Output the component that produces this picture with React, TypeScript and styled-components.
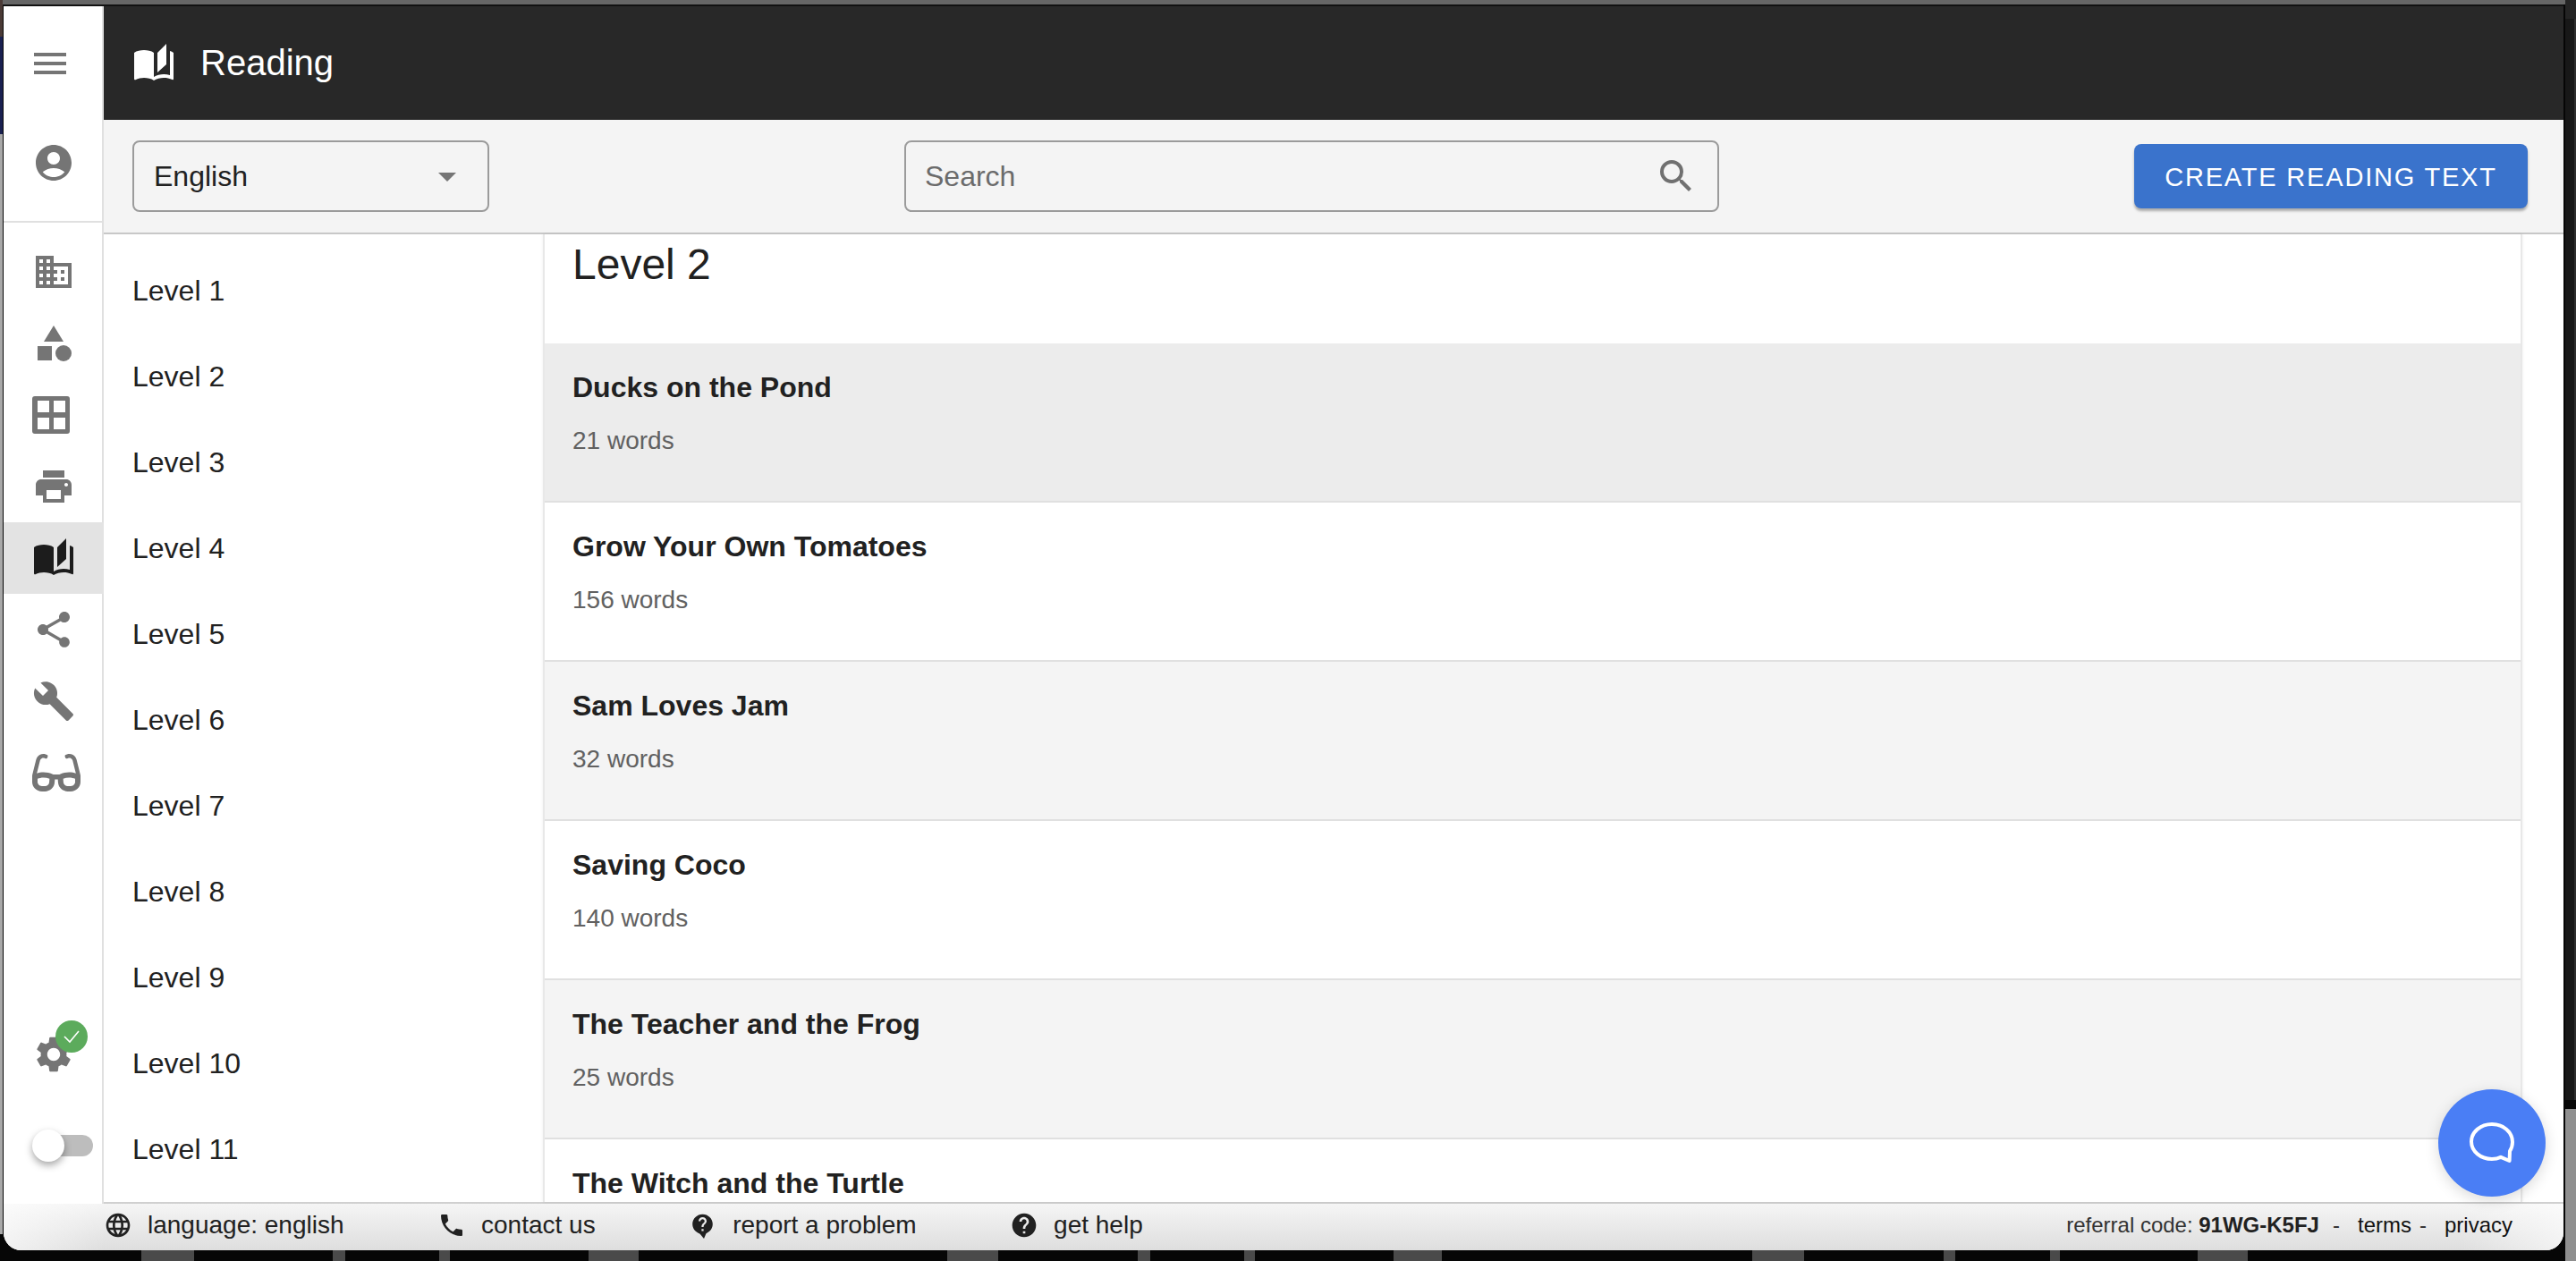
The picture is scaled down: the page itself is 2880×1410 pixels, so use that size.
import styled, { createGlobalStyle } from "styled-components";
import {
  MdAccountCircle,
  MdArrowDropDown,
  MdAutoStories,
  MdBuild,
  MdBusiness,
  MdCategory,
  MdHelp,
  MdLanguage,
  MdMenu,
  MdPhone,
  MdPrint,
  MdSearch,
  MdSettings,
  MdShare,
} from "react-icons/md";
import { FaGlasses } from "react-icons/fa";

const levels = [1, 2, 3, 4, 5, 6, 7, 8, 9, 10, 11];

const texts = [
  { title: "Ducks on the Pond", words: 21, tint: "#ececec" },
  { title: "Grow Your Own Tomatoes", words: 156, tint: "#ffffff" },
  { title: "Sam Loves Jam", words: 32, tint: "#f4f4f4" },
  { title: "Saving Coco", words: 140, tint: "#ffffff" },
  { title: "The Teacher and the Frog", words: 25, tint: "#f4f4f4" },
  { title: "The Witch and the Turtle", tint: "#ffffff" },
];

const streaks = [
  [158, 59], [372, 14], [491, 12], [658, 56], [1059, 57], [1272, 14], [1391, 12],
  [1558, 54], [1959, 58], [2173, 13], [2292, 11], [2457, 56],
];

function GridIcon() {
  return (
    <svg width="42" height="42" viewBox="0 0 42 42" fill="currentColor">
      <path
        fillRule="evenodd"
        d="M3 0h36a3 3 0 0 1 3 3v36a3 3 0 0 1-3 3H3a3 3 0 0 1-3-3V3a3 3 0 0 1 3-3zM6 5v13h13V5H6zm18 0v13h13V5H24zM6 24v13h13V24H6zm18 0v13h13V24H24z"
      />
    </svg>
  );
}

function ChatIcon() {
  return (
    <svg width="54" height="48" viewBox="0 0 54 48" fill="none">
      <path
        d="M27 3c12.5 0 23 8.5 23 20 0 4-1.2 7.400-3 10.200L46.600 44 37 39.800C34 41.500 30.500 42 27 42 14.500 42 4 33.500 4 22.500 4 11.500 14.500 3 27 3z"
        stroke="#fff"
        strokeWidth="4"
        strokeLinejoin="round"
      />
    </svg>
  );
}

// round bubble with a small tail, narrower than the plain help icon
function ProblemIcon() {
  return (
    <svg width="32" height="32" viewBox="0 0 32 32" fill="currentColor">
      <path d="M12 25l5 6 3-7z" />
      <path
        transform="translate(2.500 2.400) scale(1.130 1.100) translate(-0.500 -0.800)"
        d="M12 2C6.480 2 2 6.480 2 12s4.480 10 10 10 10-4.480 10-10S17.520 2 12 2zm1 17h-2v-2h2v2zm2.070-7.750l-.9.920C13.450 12.900 13 13.500 13 15h-2v-.5c0-1.100.45-2.100 1.170-2.830l1.240-1.260c.37-.36.59-.86.59-1.410 0-1.100-.9-2-2-2s-2 .9-2 2H8c0-2.210 1.790-4 4-4s4 1.790 4 4c0 .88-.36 1.680-.93 2.250z"
      />
    </svg>
  );
}

export default function App() {
  return (
    <>
      <GlobalStyle />
      <Desktop>
        <Wallpaper width="2880" height="1410" viewBox="0 0 2880 1410">
          <rect x="0" y="0" width="2880" height="5" fill="#666666" />
          <rect x="0" y="5" width="2866" height="2" fill="#111111" />
          <rect x="0" y="0" width="3" height="41" fill="#4a3a36" />
          <rect x="0" y="41" width="3" height="109" fill="#1a2050" />
          <rect x="0" y="150" width="3" height="1230" fill="#a8a8a8" />
          <rect x="2868" y="0" width="10" height="1230" fill="#181818" />
          <rect x="2878" y="0" width="2" height="1230" fill="#2e2e2e" />
          <rect x="2868" y="0" width="12" height="21" fill="#242424" />
          <rect x="2868" y="1240" width="12" height="170" fill="#8f8f8f" />
          {streaks.map(([x, w]) => (
            <rect key={x} x={x} y="1398" width={w} height="12" fill="#4a4a4a" />
          ))}
        </Wallpaper>

        <Window>
          <Shell>
            <Rail>
              <RailTop>
                <MenuRow>
                  <MdMenu size={48} />
                </MenuRow>
                <AccountRow>
                  <MdAccountCircle size={48} />
                </AccountRow>
              </RailTop>

              <RailNav>
                <RailItem><MdBusiness size={48} /></RailItem>
                <RailItem><MdCategory size={48} /></RailItem>
                <RailItem><GridIcon /></RailItem>
                <RailItem><MdPrint size={48} /></RailItem>
                <RailItem $active><MdAutoStories size={48} /></RailItem>
                <RailItem><MdShare size={48} /></RailItem>
                <RailItem><MdBuild size={48} /></RailItem>
                <RailItem><FaGlasses size={54} /></RailItem>
              </RailNav>

              <RailBottom>
                <GearBox>
                  <MdSettings size={48} />
                  <Badge>
                    <svg width="20" height="16" viewBox="0 0 20 16" fill="none">
                      <path d="M2 8l6 6L18 2" stroke="#fff" strokeWidth="1.600" />
                    </svg>
                  </Badge>
                </GearBox>
                <Toggle>
                  <ToggleThumb />
                </Toggle>
              </RailBottom>
            </Rail>

            <Content>
              <Header>
                <MdAutoStories size={48} />
                <HeaderTitle>Reading</HeaderTitle>
              </Header>

              <Toolbar>
                <Select>
                  <span>English</span>
                  <MdArrowDropDown size={48} />
                </Select>
                <Search>
                  <SearchHint>Search</SearchHint>
                  <MdSearch size={48} />
                </Search>
                <CreateButton>CREATE READING TEXT</CreateButton>
              </Toolbar>

              <Body>
                <Sidebar>
                  {levels.map((level) => (
                    <LevelRow key={level}>Level {level}</LevelRow>
                  ))}
                </Sidebar>

                <Panel>
                  <PanelHeading>Level 2</PanelHeading>
                  {texts.map((text) => (
                    <TextRow key={text.title} $tint={text.tint}>
                      <TextTitle>{text.title}</TextTitle>
                      {text.words && <TextWords>{text.words} words</TextWords>}
                    </TextRow>
                  ))}
                </Panel>
              </Body>
            </Content>
          </Shell>

          <Footer>
            <FooterLinks>
              <FooterLink><MdLanguage size={32} />language: english</FooterLink>
              <FooterLink><MdPhone size={32} />contact us</FooterLink>
              <FooterLink><ProblemIcon />report a problem</FooterLink>
              <FooterLink><MdHelp size={32} />get help</FooterLink>
            </FooterLinks>
            <FooterMeta>
              <span>
                referral code: <b>91WG-K5FJ</b>
              </span>
              <Dash $before={15} $after={20}>-</Dash>
              <MetaLink>terms</MetaLink>
              <Dash $before={9} $after={20}>-</Dash>
              <MetaLink>privacy</MetaLink>
            </FooterMeta>
          </Footer>

          <ChatFab>
            <ChatIcon />
          </ChatFab>
        </Window>
      </Desktop>
    </>
  );
}

const GlobalStyle = createGlobalStyle`
  html, body {
    margin: 0;
    padding: 0;
    background: #060606;
    overflow: hidden;
  }

  * {
    box-sizing: border-box;
  }

  body {
    font-family: "Liberation Sans", Arial, sans-serif;
    color: #212121;
  }
`;

const Desktop = styled.div`
  position: relative;
  width: 2880px;
  height: 1410px;
  padding: 7px 14px 12px 4px;
  overflow: hidden;
`;

const Wallpaper = styled.svg`
  position: absolute;
  top: 0;
  left: 0;
`;

const Window = styled.div`
  position: relative;
  display: flex;
  flex-direction: column;
  width: 2862px;
  height: 1391px;
  background: #fff;
  border-radius: 0 0 20px 20px;
  overflow: hidden;
`;

const Shell = styled.div`
  display: flex;
  height: 1339px;
`;

const Rail = styled.nav`
  display: flex;
  flex-direction: column;
  flex: 0 0 112px;
  border-right: 2px solid #e0e0e0;
  color: #757575;
`;

const RailTop = styled.div`
  height: 242px;
  border-bottom: 2px solid #e0e0e0;
`;

const MenuRow = styled.div`
  display: flex;
  align-items: center;
  height: 127px;
  padding-left: 28px;
`;

const AccountRow = styled.div`
  display: flex;
  align-items: center;
  height: 96px;
  padding-left: 32px;
`;

const RailNav = styled.div`
  display: flex;
  flex-direction: column;
  padding-top: 15px;
`;

const RailItem = styled.div<{ $active?: boolean }>`
  display: flex;
  align-items: center;
  height: 80px;
  padding-left: 32px;
  background: ${(p) => (p.$active ? "#e3e3e3" : "transparent")};
  color: ${(p) => (p.$active ? "#1c1c1c" : "inherit")};
  margin-right: ${(p) => (p.$active ? "-2px" : "0")};
`;

const RailBottom = styled.div`
  display: flex;
  flex-direction: column;
  gap: 60px;
  margin-top: auto;
  padding: 0 0 47px 32px;
`;

const GearBox = styled.div`
  position: relative;
  width: 48px;
  height: 48px;
`;

const Badge = styled.div`
  position: absolute;
  top: -14px;
  left: 26px;
  display: flex;
  align-items: center;
  justify-content: center;
  width: 36px;
  height: 36px;
  border-radius: 50%;
  background: #5cab5c;
`;

const Toggle = styled.div`
  position: relative;
  width: 64px;
  height: 24px;
  margin: 6px 0 6px 4px;
  border-radius: 12px;
  background: #bdbdbd;
`;

const ToggleThumb = styled.div`
  position: absolute;
  top: -6px;
  left: -4px;
  width: 36px;
  height: 36px;
  border-radius: 50%;
  background: #fff;
  box-shadow: 0 4px 8px rgba(0, 0, 0, 0.35);
`;

const Content = styled.div`
  display: flex;
  flex-direction: column;
  flex: 1;
  min-width: 0;
`;

const Header = styled.header`
  display: flex;
  align-items: center;
  gap: 28px;
  height: 127px;
  padding-left: 32px;
  background: #282828;
  color: #fff;
`;

const HeaderTitle = styled.h1`
  margin: 0;
  font-size: 40px;
  font-weight: 400;
`;

const Toolbar = styled.div`
  display: flex;
  align-items: center;
  justify-content: space-between;
  height: 128px;
  padding: 0 40px 0 32px;
  background: #f4f4f4;
  border-bottom: 2px solid #c8c8c8;
`;

const Select = styled.div`
  display: flex;
  align-items: center;
  justify-content: space-between;
  width: 399px;
  height: 80px;
  padding: 0 21px 0 22px;
  border: 2px solid #9b9b9b;
  border-radius: 8px;
  font-size: 32px;

  svg {
    color: #757575;
  }
`;

const Search = styled.div`
  display: flex;
  align-items: center;
  justify-content: space-between;
  width: 911px;
  height: 80px;
  padding: 0 22px 0 21px;
  border: 2px solid #9b9b9b;
  border-radius: 8px;

  svg {
    color: #707070;
  }
`;

const SearchHint = styled.span`
  font-size: 32px;
  color: #6b6b6b;
`;

const CreateButton = styled.button`
  width: 440px;
  height: 72px;
  padding: 2px 0 0;
  border: 0;
  border-radius: 8px;
  background: #3a73cc;
  color: #fff;
  font-family: inherit;
  font-size: 29px;
  letter-spacing: 1.800px;
  box-shadow: 0 3px 3px rgba(0, 0, 0, 0.3);
`;

const Body = styled.div`
  display: flex;
  flex: 1;
  min-height: 0;
  border-bottom: 2px solid #d0d0d0;
`;

const Sidebar = styled.aside`
  flex: 0 0 491px;
  padding-top: 15px;
  overflow: hidden;
`;

const LevelRow = styled.div`
  display: flex;
  align-items: center;
  height: 96px;
  padding-left: 32px;
  font-size: 32px;
`;

const Panel = styled.main`
  flex: 1;
  margin-right: 46px;
  border-left: 2px solid #e8e8e8;
  border-right: 2px solid #e8e8e8;
  box-shadow: 0 0 3px rgba(0, 0, 0, 0.08);
  overflow: hidden;
`;

const PanelHeading = styled.h2`
  height: 122px;
  margin: 0;
  padding: 7px 0 0 31px;
  font-size: 48px;
  font-weight: 400;
  line-height: 54px;
`;

const TextRow = styled.div<{ $tint: string }>`
  height: 178px;
  padding: 31px 31px 0;
  background: ${(p) => p.$tint};
  border-bottom: 2px solid #e0e0e0;
`;

const TextTitle = styled.div`
  font-size: 32px;
  font-weight: 700;
  line-height: 36px;
`;

const TextWords = styled.div`
  margin-top: 26px;
  font-size: 28px;
  line-height: 32px;
  color: #616161;
`;

const Footer = styled.footer`
  display: flex;
  align-items: center;
  justify-content: space-between;
  flex: 1;
  padding: 0 57px 4px 112px;
  background: linear-gradient(90deg, rgba(255, 255, 255, 0.6), transparent 4%, transparent 96%, rgba(255, 255, 255, 0.6)),
    linear-gradient(180deg, #f5f5f5, #dedede);
`;

const FooterLinks = styled.div`
  display: flex;
  gap: 104.500px;
`;

const FooterLink = styled.a`
  display: flex;
  align-items: center;
  gap: 17px;
  font-size: 28px;
`;

const FooterMeta = styled.div`
  display: flex;
  align-items: center;
  font-size: 24px;
  color: #333;

  b {
    color: #212121;
  }
`;

const Dash = styled.span<{ $before: number; $after: number }>`
  margin: 0 ${(p) => p.$after}px 0 ${(p) => p.$before}px;
`;

const MetaLink = styled.a`
  color: #111;
`;

const ChatFab = styled.button`
  position: absolute;
  right: 20px;
  bottom: 60px;
  display: flex;
  align-items: center;
  justify-content: center;
  width: 120px;
  height: 120px;
  padding: 0;
  border: 0;
  border-radius: 50%;
  background: #4a7ef5;
  box-shadow: 0 4px 16px rgba(0, 0, 0, 0.15);
`;
